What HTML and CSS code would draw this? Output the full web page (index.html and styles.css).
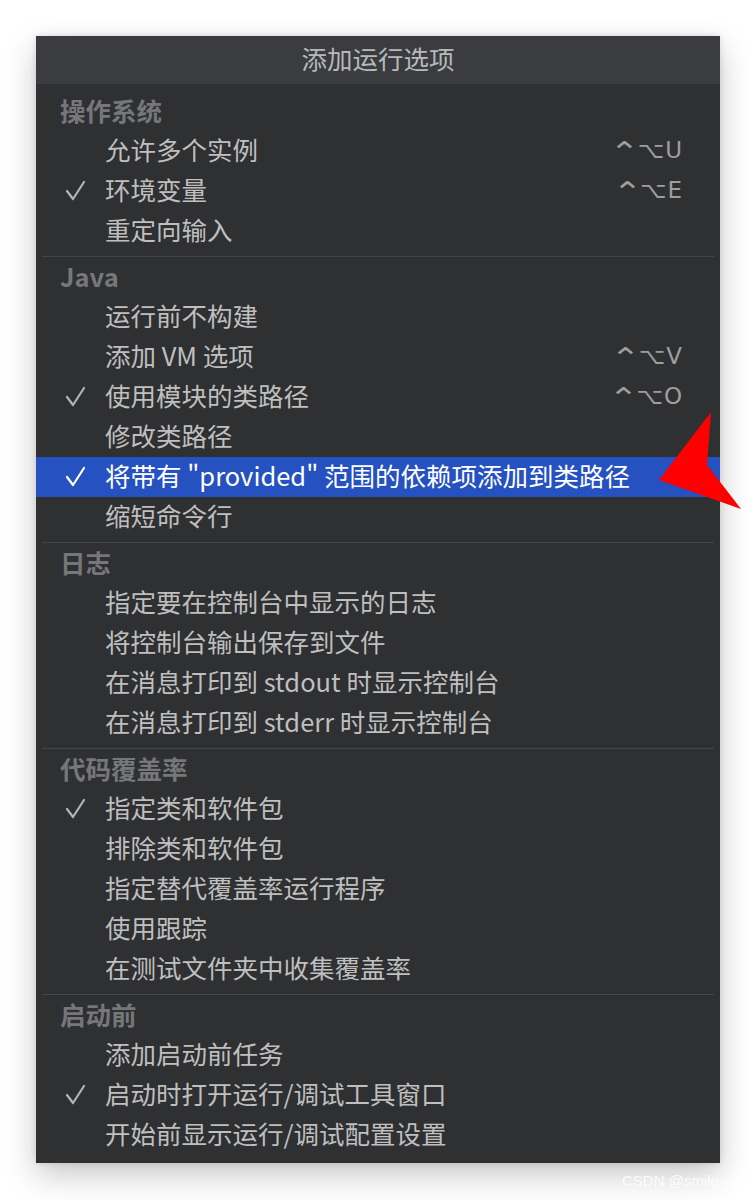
FILE: index.html
```html
<!DOCTYPE html>
<html lang="zh">
<head>
<meta charset="utf-8">
<title>添加运行选项</title>
<link rel="stylesheet" href="styles.css">
</head>
<body>
<div class="panel">
  <div class="title">添加运行选项</div>
  <div class="body">
    <div class="heading">操作系统</div>
    <div class="row"><span class="check"></span><span class="label">允许多个实例</span><span class="key"><span class="ctrl">⌃</span>⌥U</span></div>
    <div class="row"><span class="check"><svg viewBox="0 0 22 22" width="22" height="22"><polyline points="2,11 8,19 19,2" fill="none" stroke="currentColor" stroke-width="2.2" stroke-linecap="round" stroke-linejoin="round"/></svg></span><span class="label">环境变量</span><span class="key"><span class="ctrl">⌃</span>⌥E</span></div>
    <div class="row"><span class="check"></span><span class="label">重定向输入</span></div>
    <div class="sep"></div>
    <div class="heading">Java</div>
    <div class="row"><span class="check"></span><span class="label">运行前不构建</span></div>
    <div class="row"><span class="check"></span><span class="label">添加 VM 选项</span><span class="key"><span class="ctrl">⌃</span>⌥V</span></div>
    <div class="row"><span class="check"><svg viewBox="0 0 22 22" width="22" height="22"><polyline points="2,11 8,19 19,2" fill="none" stroke="currentColor" stroke-width="2.2" stroke-linecap="round" stroke-linejoin="round"/></svg></span><span class="label">使用模块的类路径</span><span class="key"><span class="ctrl">⌃</span>⌥O</span></div>
    <div class="row"><span class="check"></span><span class="label">修改类路径</span></div>
    <div class="row selected"><span class="check"><svg viewBox="0 0 22 22" width="22" height="22"><polyline points="2,11 8,19 19,2" fill="none" stroke="currentColor" stroke-width="2.2" stroke-linecap="round" stroke-linejoin="round"/></svg></span><span class="label">将带有 "provided" 范围的依赖项添加到类路径</span></div>
    <div class="row"><span class="check"></span><span class="label">缩短命令行</span></div>
    <div class="sep"></div>
    <div class="heading">日志</div>
    <div class="row"><span class="check"></span><span class="label">指定要在控制台中显示的日志</span></div>
    <div class="row"><span class="check"></span><span class="label">将控制台输出保存到文件</span></div>
    <div class="row"><span class="check"></span><span class="label">在消息打印到 stdout 时显示控制台</span></div>
    <div class="row"><span class="check"></span><span class="label">在消息打印到 stderr 时显示控制台</span></div>
    <div class="sep"></div>
    <div class="heading">代码覆盖率</div>
    <div class="row"><span class="check"><svg viewBox="0 0 22 22" width="22" height="22"><polyline points="2,11 8,19 19,2" fill="none" stroke="currentColor" stroke-width="2.2" stroke-linecap="round" stroke-linejoin="round"/></svg></span><span class="label">指定类和软件包</span></div>
    <div class="row"><span class="check"></span><span class="label">排除类和软件包</span></div>
    <div class="row"><span class="check"></span><span class="label">指定替代覆盖率运行程序</span></div>
    <div class="row"><span class="check"></span><span class="label">使用跟踪</span></div>
    <div class="row"><span class="check"></span><span class="label">在测试文件夹中收集覆盖率</span></div>
    <div class="sep"></div>
    <div class="heading">启动前</div>
    <div class="row"><span class="check"></span><span class="label">添加启动前任务</span></div>
    <div class="row"><span class="check"><svg viewBox="0 0 22 22" width="22" height="22"><polyline points="2,11 8,19 19,2" fill="none" stroke="currentColor" stroke-width="2.2" stroke-linecap="round" stroke-linejoin="round"/></svg></span><span class="label">启动时打开运行/调试工具窗口</span></div>
    <div class="row"><span class="check"></span><span class="label">开始前显示运行/调试配置设置</span></div>
  </div>
</div>
<svg class="arrow" width="756" height="1200" viewBox="0 0 756 1200"><polygon points="659,480 711,412 707,465 741,509" fill="#ff0000"/></svg>
<div class="watermark">CSDN @smile-yan</div>
</body>
</html>
```
FILE: styles.css
```css
html, body {
  margin: 0;
  padding: 0;
  background: #ffffff;
}
body {
  position: relative;
  width: 756px;
  height: 1200px;
  overflow: hidden;
  font-family: "Noto Sans CJK SC", "Noto Sans", sans-serif;
}
.panel {
  margin: 36px 0 0 36px;
  width: 684px;
  background: #2f3032;
  box-shadow: 0 12px 30px rgba(0, 0, 0, 0.22), 0 0 6px rgba(0, 0, 0, 0.12);
  display: flex;
  flex-direction: column;
}
.title {
  height: 48px;
  line-height: 44px;
  background: #3a3c40;
  color: #b8b9ba;
  font-size: 25.5px;
  text-align: center;
}
.body {
  padding: 8px 0;
  display: flex;
  flex-direction: column;
}
.heading {
  height: 39px;
  line-height: 35px;
  padding-left: 24px;
  color: #76777a;
  font-size: 25.5px;
  font-weight: 700;
}
.row {
  height: 40px;
  display: flex;
  align-items: center;
  padding-left: 29px;
  padding-right: 37px;
  color: #bfbfbf;
  font-size: 25.5px;
}
.row.selected {
  background: #2551c1;
  color: #ffffff;
}
.check {
  width: 40px;
  flex: none;
  display: flex;
  align-items: center;
  color: #b3b3b3;
}
.row.selected .check {
  color: #ffffff;
}
.label {
  white-space: nowrap;
  line-height: 1;
  padding-bottom: 4px;
}
.key {
  margin-left: auto;
  color: #9e9e9e;
  font-family: "DejaVu Sans", "Noto Sans", sans-serif;
  font-size: 23px;
  letter-spacing: 1px;
  line-height: 1;
  padding-bottom: 2px;
}
.ctrl {
  display: inline-block;
  transform: scale(1.55, 1.25);
  transform-origin: 50% 20%;
  margin-right: 2px;
}
.sep {
  height: 1px;
  margin: 5px 6px 1px;
  background: #444548;
}
.arrow {
  position: absolute;
  left: 0;
  top: 0;
  pointer-events: none;
}
.watermark {
  position: absolute;
  left: 622px;
  top: 1172px;
  font-family: "Liberation Sans", sans-serif;
  font-size: 15px;
  color: rgba(255, 255, 255, 0.85);
}
```
